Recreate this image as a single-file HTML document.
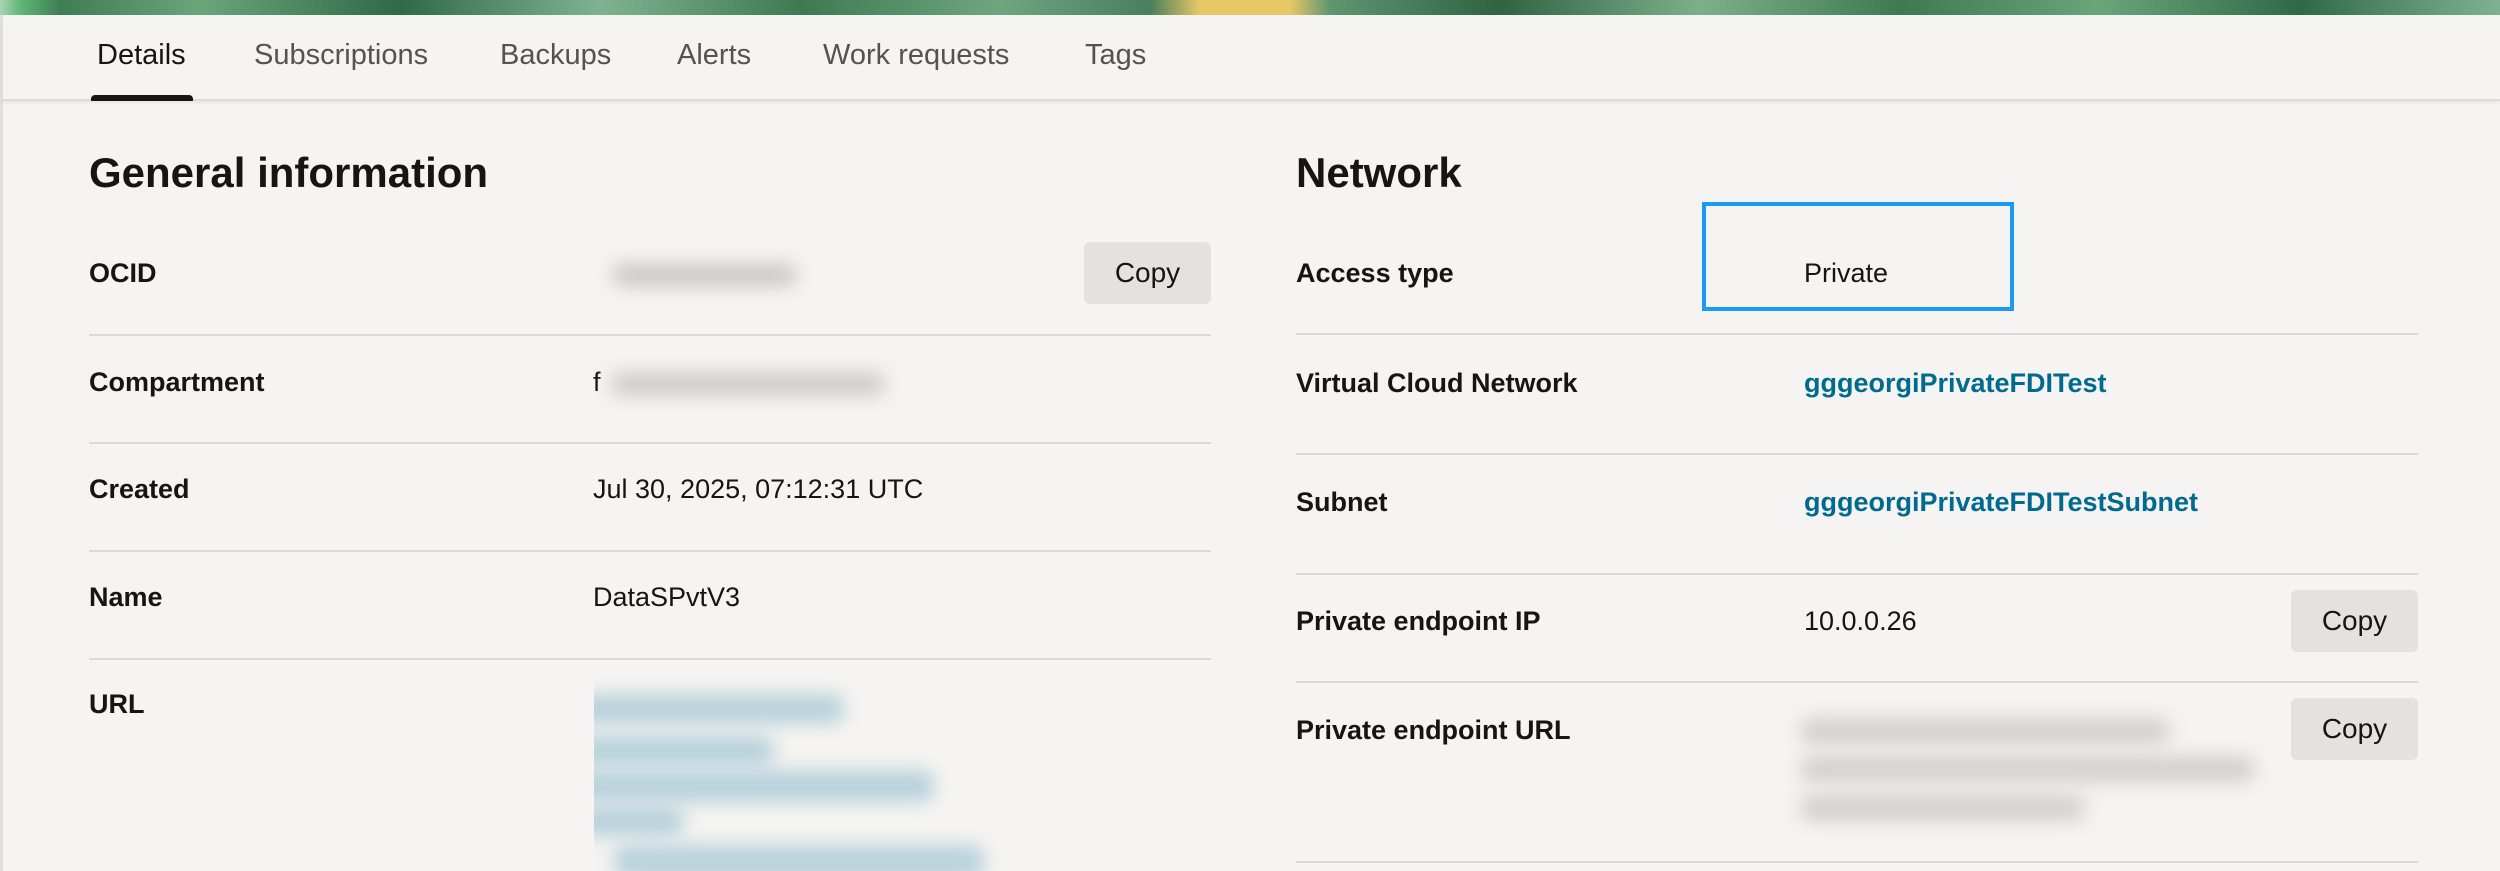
<!DOCTYPE html>
<html><head><meta charset="utf-8"><style>
*{margin:0;padding:0;box-sizing:border-box}
html,body{width:2500px;height:871px;overflow:hidden;background:#f5f4f2;font-family:"Liberation Sans",sans-serif;color:#161513}
.abs{position:absolute}
.banner{left:0;top:0;width:2500px;height:15px;background:linear-gradient(90deg,#a9d4b4 0,#5fb878 20px,#3f7d55 60px,#6aa57c 200px,#2f6a45 400px,#7fb38f 600px,#3d7a52 800px,#6ea680 1000px,#497f5c 1150px,#e8c766 1200px,#e8c766 1290px,#5e9670 1330px,#2f6342 1500px,#7db08a 1700px,#3d7a52 1900px,#6aa57c 2100px,#2f6a45 2300px,#7fb38f 2500px)}
.tabbar{left:2px;top:15px;width:2498px;height:86px;border-bottom:2px solid #dcdad7;box-shadow:0 2px 3px rgba(0,0,0,.06)}
.leftline{left:0;top:15px;width:3px;height:856px;background:#e2e0dd}
.tab{top:39px;font-size:29px;color:#56524e;white-space:nowrap}
.under{left:91px;top:95px;width:102px;height:6px;background:#161513;border-radius:4px 4px 0 0}
h2{position:absolute;font-size:42px;font-weight:bold;white-space:nowrap}
.lbl{font-size:27px;font-weight:bold;white-space:nowrap}
.val{font-size:27px;white-space:nowrap}
.link{font-size:27px;color:#006b8f;font-weight:bold;white-space:nowrap}
.hr{height:2px;background:#dcdad7}
.btn{background:#e4e2df;border-radius:6px;font-size:28px;text-align:center;line-height:62px;width:127px;height:62px}
.blur{filter:blur(9px);border-radius:12px}
</style></head><body>
<div class="abs banner"></div>
<div class="abs leftline"></div>
<div class="abs tabbar"></div>
<div class="abs tab" style="left:97px;color:#161513">Details</div>
<div class="abs tab" style="left:254px">Subscriptions</div>
<div class="abs tab" style="left:500px">Backups</div>
<div class="abs tab" style="left:677px">Alerts</div>
<div class="abs tab" style="left:823px">Work requests</div>
<div class="abs tab" style="left:1085px">Tags</div>
<div class="abs under"></div>

<h2 style="left:89px;top:149px">General information</h2>
<h2 style="left:1296px;top:149px">Network</h2>

<!-- left -->
<div class="abs lbl" style="left:89px;top:258px">OCID</div>
<div class="abs blur" style="left:612px;top:264px;width:185px;height:22px;background:#c9c7c4"></div>
<div class="abs btn" style="left:1084px;top:242px">Copy</div>
<div class="abs hr" style="left:89px;top:334px;width:1122px"></div>
<div class="abs lbl" style="left:89px;top:367px">Compartment</div>
<div class="abs val" style="left:593px;top:367px">f</div>
<div class="abs blur" style="left:610px;top:372px;width:275px;height:24px;background:#cfcdca"></div>
<div class="abs hr" style="left:89px;top:442px;width:1122px"></div>
<div class="abs lbl" style="left:89px;top:474px">Created</div>
<div class="abs val" style="left:593px;top:474px">Jul 30, 2025, 07:12:31 UTC</div>
<div class="abs hr" style="left:89px;top:550px;width:1122px"></div>
<div class="abs lbl" style="left:89px;top:582px">Name</div>
<div class="abs val" style="left:593px;top:582px">DataSPvtV3</div>
<div class="abs hr" style="left:89px;top:658px;width:1122px"></div>
<div class="abs lbl" style="left:89px;top:689px">URL</div>
<div class="abs" style="left:594px;top:670px;width:420px;height:201px;overflow:hidden">
<div class="abs blur" style="left:-20px;top:24px;width:270px;height:30px;background:#b8d1db"></div>
<div class="abs blur" style="left:-20px;top:66px;width:200px;height:30px;background:#b8d1db"></div>
<div class="abs blur" style="left:-20px;top:100px;width:360px;height:32px;background:#b8d1db"></div>
<div class="abs blur" style="left:-20px;top:136px;width:110px;height:30px;background:#b8d1db"></div>
<div class="abs blur" style="left:20px;top:175px;width:370px;height:34px;background:#b8d1db"></div>
</div>

<!-- right -->
<div class="abs lbl" style="left:1296px;top:258px">Access type</div>
<div class="abs" style="left:1702px;top:202px;width:312px;height:109px;border:4px solid #1a9af0"></div>
<div class="abs val" style="left:1804px;top:258px">Private</div>
<div class="abs hr" style="left:1296px;top:333px;width:1122px"></div>
<div class="abs lbl" style="left:1296px;top:368px">Virtual Cloud Network</div>
<div class="abs link" style="left:1804px;top:368px">gggeorgiPrivateFDITest</div>
<div class="abs hr" style="left:1296px;top:453px;width:1122px"></div>
<div class="abs lbl" style="left:1296px;top:487px">Subnet</div>
<div class="abs link" style="left:1804px;top:487px">gggeorgiPrivateFDITestSubnet</div>
<div class="abs hr" style="left:1296px;top:573px;width:1122px"></div>
<div class="abs lbl" style="left:1296px;top:606px">Private endpoint IP</div>
<div class="abs val" style="left:1804px;top:606px">10.0.0.26</div>
<div class="abs btn" style="left:2291px;top:590px">Copy</div>
<div class="abs hr" style="left:1296px;top:681px;width:1122px"></div>
<div class="abs lbl" style="left:1296px;top:715px">Private endpoint URL</div>
<div class="abs btn" style="left:2291px;top:698px">Copy</div>
<div class="abs blur" style="left:1800px;top:718px;width:370px;height:26px;background:#d2d0cd"></div>
<div class="abs blur" style="left:1800px;top:756px;width:455px;height:26px;background:#d2d0cd"></div>
<div class="abs blur" style="left:1800px;top:795px;width:285px;height:26px;background:#d2d0cd"></div>
<div class="abs hr" style="left:1296px;top:861px;width:1122px"></div>
</body></html>
